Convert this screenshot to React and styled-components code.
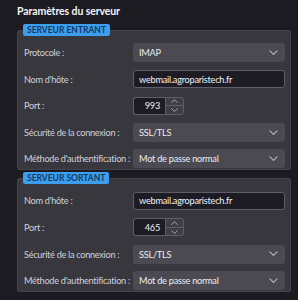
import React from 'react';
import styled, { createGlobalStyle } from 'styled-components';

const GlobalStyle = createGlobalStyle`
  html, body {
    margin: 0;
    padding: 0;
    background: #1c1b22;
  }
  body {
    font-family: Lato, "Liberation Sans", sans-serif;
    color: #d6d5dc;
  }
`;

const Page = styled.div`
  padding: 3px 7px 0 17px;
  display: flex;
  flex-direction: column;
`;

const Title = styled.h1`
  margin: 0 0 5px;
  font-size: 10.5px;
  font-weight: 700;
  color: #f4f4f7;
  line-height: 16px;
  letter-spacing: -0.1px;
`;

const Panel = styled.fieldset`
  margin: 0 0 ${(p) => p.$gap || 0}px;
  padding: 7px 5px 1px 6px;
  border: 1px solid #45444c;
  border-radius: 3px;
  background: #38373e;
  min-width: 0;
`;

const Badge = styled.legend`
  padding: 0 4px;
  margin-left: -1px;
  height: 12px;
  line-height: 12px;
  font-size: 8.5px;
  font-weight: 700;
  color: #143a66;
  background: #3c9eec;
  border-radius: 2px;
`;

const Rows = styled.div`
  display: grid;
  grid-template-columns: 109px 1fr;
  grid-auto-rows: 19px;
  row-gap: 7.6px;
  align-items: center;
`;

const Label = styled.label`
  font-size: 9.2px;
  letter-spacing: -0.3px;
  color: #d2d1d8;
  white-space: nowrap;
`;

const Select = styled.div`
  height: 19px;
  box-sizing: border-box;
  background: #4b4a53;
  border-radius: 3px;
  display: flex;
  align-items: center;
  justify-content: space-between;
  padding: 0 7px 0 6px;
  font-size: 9.2px;
  letter-spacing: -0.25px;
  color: #ececf0;
`;

const TextInput = styled.div`
  height: 18px;
  box-sizing: border-box;
  background: #1d1c24;
  border: 1px solid #5f5e68;
  border-radius: 3px;
  display: flex;
  align-items: center;
  padding: 0 5px;
  font-size: 9.2px;
  letter-spacing: -0.25px;
  color: #f0f0f4;
`;

const PortWrap = styled.div`
  display: flex;
  height: 18px;
`;

const PortInput = styled(TextInput)`
  width: 32px;
  justify-content: flex-end;
  border-right: none;
  border-radius: 3px 0 0 3px;
  padding: 0 5px 0 0;
`;

const Spinner = styled.div`
  width: 19px;
  box-sizing: border-box;
  border: 1px solid #5f5e68;
  border-radius: 0 3px 3px 0;
  display: flex;
  flex-direction: column;
  background: #3f3e46;
`;

const SpinHalf = styled.div`
  flex: 1;
  display: flex;
  align-items: center;
  justify-content: center;
  border-top: ${(p) => (p.$down ? '1px solid #5f5e68' : 'none')};
`;

const Chevron = ({ up, size = 9 }) => (
  <svg width={size} height={size * 0.6} viewBox="0 0 10 6" fill="none">
    <path
      d={up ? 'M1 5 L5 1 L9 5' : 'M1 1 L5 5 L9 1'}
      stroke="#b8b7bf"
      strokeWidth="1.2"
      strokeLinecap="round"
      strokeLinejoin="round"
    />
  </svg>
);

const SelectField = ({ value }) => (
  <Select>
    <span>{value}</span>
    <Chevron />
  </Select>
);

const PortField = ({ value }) => (
  <PortWrap>
    <PortInput>{value}</PortInput>
    <Spinner>
      <SpinHalf>
        <Chevron up size={7} />
      </SpinHalf>
      <SpinHalf $down>
        <Chevron size={7} />
      </SpinHalf>
    </Spinner>
  </PortWrap>
);

const App = () => (
  <>
    <GlobalStyle />
    <Page>
      <Title>Paramètres du serveur</Title>
      <Panel $gap={2}>
        <Badge>SERVEUR ENTRANT</Badge>
        <Rows>
          <Label>Protocole :</Label>
          <SelectField value="IMAP" />
          <Label>Nom d'hôte :</Label>
          <TextInput>webmail.agroparistech.fr</TextInput>
          <Label>Port :</Label>
          <PortField value="993" />
          <Label>Sécurité de la connexion :</Label>
          <SelectField value="SSL/TLS" />
          <Label>Méthode d'authentification :</Label>
          <SelectField value="Mot de passe normal" />
        </Rows>
      </Panel>
      <Panel>
        <Badge>SERVEUR SORTANT</Badge>
        <Rows>
          <Label>Nom d'hôte :</Label>
          <TextInput>webmail.agroparistech.fr</TextInput>
          <Label>Port :</Label>
          <PortField value="465" />
          <Label>Sécurité de la connexion :</Label>
          <SelectField value="SSL/TLS" />
          <Label>Méthode d'authentification :</Label>
          <SelectField value="Mot de passe normal" />
        </Rows>
      </Panel>
    </Page>
  </>
);

export default App;
